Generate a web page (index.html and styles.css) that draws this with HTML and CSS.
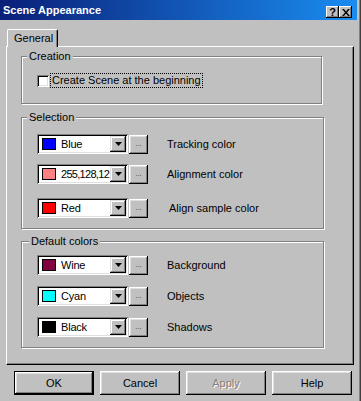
FILE: index.html
```html
<!DOCTYPE html>
<html lang="en">
<head>
    <meta charset="UTF-8">
    <title>Scene Appearance</title>
    <link rel="stylesheet" href="styles.css">
</head>
<body>
    <div class="window">
        <div class="titlebar">
            <span class="title">Scene Appearance</span>
            <div class="caption-buttons">
                <span class="cap-btn help-glyph">?</span>
                <span class="cap-btn">
                    <svg width="8" height="7" viewBox="0 0 8 7"><path d="M0 0h2l2 2.5 2-2.5h2l-3 3.5 3 3.5h-2l-2-2.5-2 2.5h-2l3-3.5z" fill="#000"/></svg>
                </span>
            </div>
        </div>

        <div class="tabs">
            <div class="tab">General</div>
        </div>

        <div class="panel">
            <!-- Creation -->
            <div class="group creation">
                <div class="legend">Creation</div>
                <label class="check-row">
                    <span class="checkbox"></span>
                    <span class="focus">Create Scene at the beginning</span>
                </label>
            </div>

            <!-- Selection -->
            <div class="group selection">
                <div class="legend">Selection</div>
                <div class="rows">
                    <div class="row">
                        <div class="combo">
                            <span class="swatch" style="background:#0000ff"></span>
                            <span class="combo-text">Blue</span>
                            <span class="drop"><svg width="7" height="4" viewBox="0 0 7 4"><path d="M0 0h7l-3.5 4z" fill="#000"/></svg></span>
                        </div>
                        <span class="dots">...</span>
                        <span class="row-label">Tracking color</span>
                    </div>
                    <div class="row">
                        <div class="combo">
                            <span class="swatch" style="background:#ff8080"></span>
                            <span class="combo-text narrow">255,128,12</span>
                            <span class="drop"><svg width="7" height="4" viewBox="0 0 7 4"><path d="M0 0h7l-3.5 4z" fill="#000"/></svg></span>
                        </div>
                        <span class="dots">...</span>
                        <span class="row-label">Alignment color</span>
                    </div>
                    <div class="row lower">
                        <div class="combo">
                            <span class="swatch" style="background:#ff0000"></span>
                            <span class="combo-text">Red</span>
                            <span class="drop"><svg width="7" height="4" viewBox="0 0 7 4"><path d="M0 0h7l-3.5 4z" fill="#000"/></svg></span>
                        </div>
                        <span class="dots">...</span>
                        <span class="row-label shifted">Align sample color</span>
                    </div>
                </div>
            </div>

            <!-- Default colors -->
            <div class="group defaults">
                <div class="legend legend-wide">Default colors</div>
                <div class="rows tight">
                    <div class="row">
                        <div class="combo">
                            <span class="swatch" style="background:#800040"></span>
                            <span class="combo-text">Wine</span>
                            <span class="drop"><svg width="7" height="4" viewBox="0 0 7 4"><path d="M0 0h7l-3.5 4z" fill="#000"/></svg></span>
                        </div>
                        <span class="dots">...</span>
                        <span class="row-label">Background</span>
                    </div>
                    <div class="row">
                        <div class="combo">
                            <span class="swatch" style="background:#00ffff"></span>
                            <span class="combo-text">Cyan</span>
                            <span class="drop"><svg width="7" height="4" viewBox="0 0 7 4"><path d="M0 0h7l-3.5 4z" fill="#000"/></svg></span>
                        </div>
                        <span class="dots">...</span>
                        <span class="row-label">Objects</span>
                    </div>
                    <div class="row">
                        <div class="combo">
                            <span class="swatch" style="background:#000000"></span>
                            <span class="combo-text">Black</span>
                            <span class="drop"><svg width="7" height="4" viewBox="0 0 7 4"><path d="M0 0h7l-3.5 4z" fill="#000"/></svg></span>
                        </div>
                        <span class="dots">...</span>
                        <span class="row-label">Shadows</span>
                    </div>
                </div>
            </div>
        </div>

        <div class="buttons">
            <span class="btn default">OK</span>
            <span class="btn">Cancel</span>
            <span class="btn disabled">Apply</span>
            <span class="btn">Help</span>
        </div>
    </div>
</body>
</html>
```

FILE: styles.css
```css
* {
    box-sizing: border-box;
}

body {
    margin: 0;
    background-color: #c0c0c0;
    font-family: "Liberation Sans", Arial, sans-serif;
    font-size: 11px;
    color: #000;
}

.window {
    width: 361px;
    height: 401px;
    background-color: #c0c0c0;
    box-shadow: inset -1px 0 #404040, inset -2px 0 #808080;
    overflow: hidden;
}

.titlebar {
    width: 357px;
    height: 20px;
    display: flex;
    justify-content: space-between;
    align-items: center;
    padding: 0 5px 0 3px;
    background: linear-gradient(90deg, #0a1f78, #1a8cf0);
    color: #fff;
    font-weight: bold;
}

.caption-buttons {
    display: flex;
    align-self: flex-start;
    margin-top: 6px;
}

.cap-btn {
    width: 13px;
    height: 12px;
    display: flex;
    justify-content: center;
    align-items: center;
    background-color: #c0c0c0;
    box-shadow: inset -1px -1px #000, inset 1px 1px #fff, inset -2px -2px #808080;
    color: #000;
}

.help-glyph {
    font-size: 11px;
    font-weight: bold;
    line-height: 12px;
}

.tabs {
    display: flex;
    padding: 9px 0 0 7px;
}

.tab {
    position: relative;
    z-index: 1;
    width: 51px;
    height: 18px;
    margin-bottom: -1px;
    padding: 2px 0 0 6px;
    background-color: #c0c0c0;
    border-top: 1px solid #fff;
    border-left: 1px solid #fff;
    border-right: 1px solid #000;
    border-radius: 2px 2px 0 0;
    box-shadow: inset -1px 0 #808080;
    line-height: 13px;
}

.panel {
    width: 348px;
    height: 319px;
    margin-left: 6px;
    padding: 9px 0 0 14px;
    border-top: 1px solid #fff;
    border-left: 1px solid #fff;
    border-right: 1px solid #000;
    border-bottom: 1px solid #000;
    box-shadow: inset -1px -1px #808080;
}

.group {
    width: 303px;
    border: 1px solid #808080;
    box-shadow: 1px 1px 0 #fff, inset 1px 1px 0 #fff;
}

.legend {
    width: fit-content;
    margin: -7px 0 -6px 5px;
    padding: 0 2px;
    line-height: 13px;
    background-color: #c0c0c0;
    position: relative;
}

.legend-wide {
    margin-left: 7px;
}

.creation {
    width: 301px;
    height: 48px;
}

.selection {
    height: 112px;
    margin-top: 13px;
}

.defaults {
    height: 107px;
    margin-top: 12px;
}

.check-row {
    display: flex;
    align-items: center;
    margin: 16px 0 0 15px;
}

.checkbox {
    width: 12px;
    height: 12px;
    background-color: #fff;
    box-shadow: inset 1px 1px #808080, inset -1px -1px #fff, inset 2px 2px #000, inset -2px -2px #dfdfdf;
}

.focus {
    margin-left: 1px;
    padding: 0 1px;
    border: 1px dotted #000;
    line-height: 13px;
}

.rows {
    display: flex;
    flex-direction: column;
    gap: 10px;
    padding: 16px 0 0 15px;
}

.rows.tight {
    gap: 11px;
    padding-top: 13px;
}

.row {
    display: flex;
    align-items: center;
    height: 20px;
}

.row.lower {
    margin-top: 4px;
}

.combo {
    width: 91px;
    height: 20px;
    display: flex;
    align-items: center;
    padding: 2px;
    background-color: #fff;
    box-shadow: inset 1px 1px #808080, inset -1px -1px #fff, inset 2px 2px #000, inset -2px -2px #dfdfdf;
}

.swatch {
    flex: none;
    width: 14px;
    height: 12px;
    margin-left: 3px;
    border: 1px solid #000;
}

.combo-text {
    flex: 1;
    min-width: 0;
    margin-left: 5px;
    white-space: nowrap;
    letter-spacing: -0.2px;
}

.combo-text.narrow {
    letter-spacing: -0.7px;
}

.drop {
    flex: none;
    width: 16px;
    height: 16px;
    display: flex;
    justify-content: center;
    align-items: center;
    background-color: #c0c0c0;
    box-shadow: inset -1px -1px #000, inset 1px 1px #dfdfdf, inset -2px -2px #808080, inset 2px 2px #fff;
}

.dots {
    width: 19px;
    height: 19px;
    margin-left: 1px;
    align-self: flex-end;
    padding-top: 4px;
    text-align: center;
    font-size: 8px;
    line-height: 10px;
    color: #404040;
    background-color: #c0c0c0;
    box-shadow: inset -1px -1px #000, inset 1px 1px #fff, inset -2px -2px #808080, inset 2px 2px #dfdfdf;
}

.row-label {
    margin-left: 19px;
}

.row-label.shifted {
    margin-left: 21px;
}

.buttons {
    display: flex;
    gap: 6px;
    padding: 6px 0 0 14px;
}

.btn {
    width: 80px;
    height: 24px;
    display: flex;
    justify-content: center;
    align-items: center;
    background-color: #c0c0c0;
    box-shadow: inset -1px -1px #000, inset 1px 1px #fff, inset -2px -2px #808080, inset 2px 2px #dfdfdf;
}

.btn.default {
    border: 1px solid #000;
}

.btn.disabled {
    color: #808080;
    text-shadow: 1px 1px #fff;
}
```
